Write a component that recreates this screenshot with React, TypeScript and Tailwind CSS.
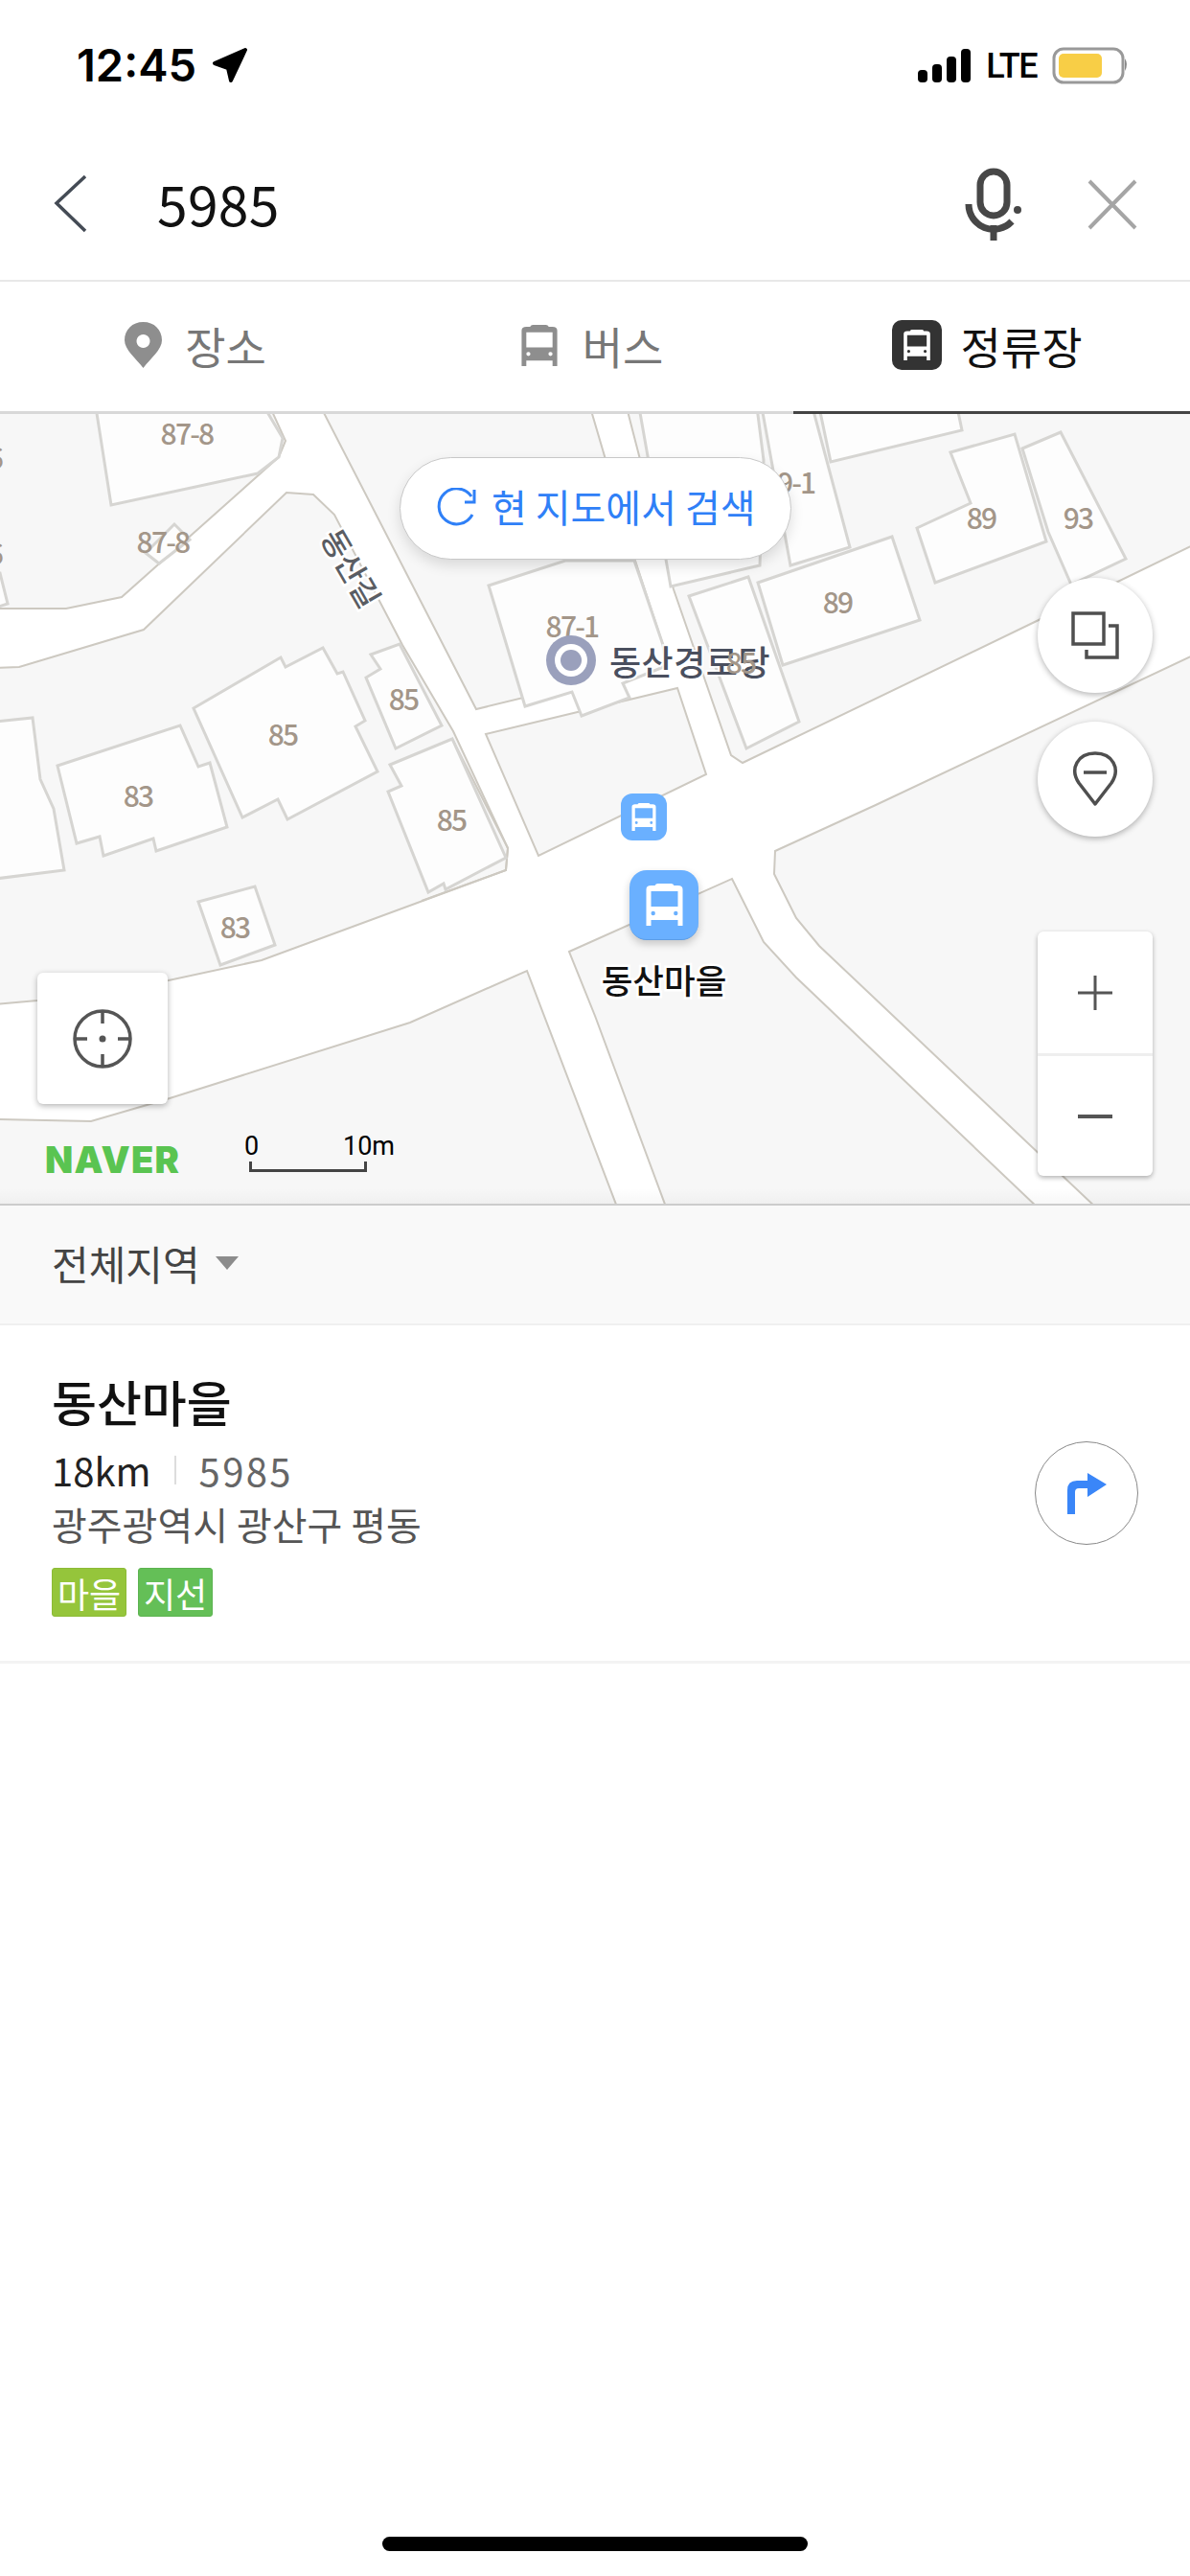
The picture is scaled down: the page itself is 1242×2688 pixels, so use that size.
import React from "react";

const Bus = ({ w, h, color }: { w: number; h: number; color: string }) => (
  <svg width={w} height={h} viewBox="0 0 38 44" className="block">
    <path
      fill={color}
      fillRule="evenodd"
      d="M0 6 Q0 2 5 2 H9 Q10 0 12 0 H26 Q28 0 29 2 H33 Q38 2 38 6 V44 H33 V38 H5 V44 H0 Z M5 8 V24 H33 V8 Z M5 31a2.2 2.2 0 1 0 4.4 0a2.2 2.2 0 1 0 -4.4 0Z M28.6 31a2.2 2.2 0 1 0 4.4 0a2.2 2.2 0 1 0 -4.4 0Z"
    />
  </svg>
);

const LAND = [
  "-5,425 282,425 298,460 291,477 127,623 69,635 -5,635",
  "-5,697 20,696 150,657 299,514 327,516 349,537 396,627 420,673 473,763 530,885 528,908 273,1002 176,1023 39,1044 -5,1048",
  "335,425 616,425 663,585 692,673 695,692 497,740",
  "507,766 707,718 737,808 562,893",
  "654,425 703,615 763,788 775,796 1084,647 1247,568 1247,425",
  "914,840 1247,683 1247,1262 1146,1262 855,987 831,958 808,912 809,888",
  "594,993 764,917 797,983 831,1020 1085,1262 696,1262 621,1060",
  "-5,1168 95,1170 174,1147 428,1067 550,1013 645,1262 -5,1262",
];

const BUILDINGS = [
  "100,425 116,527 269,494 291,477 295,457 276,425",
  "182,547 152,577 166,588 198,563",
  "-5,598 0,598 8,630 -5,634",
  "202,739 293,686 298,696 337,676 352,703 358,701 381,752 371,758 394,805 300,855 290,834 253,853",
  "60,799 188,757 207,800 219,796 237,863 163,888 160,875 108,893 104,873 80,880",
  "-5,753 34,749 42,813 56,844 67,908 -5,917",
  "207,941 266,925 287,986 230,1007",
  "387,683 417,672 461,757 413,781 382,707 397,698",
  "407,798 472,771 528,895 465,928 463,922 447,931 405,826 419,820",
  "510,611 590,585 662,585 692,673 695,695 650,713 657,728 607,747 597,722 548,737",
  "667,425 790,425 797,480 793,590 700,612",
  "795,425 825,590 887,571 848,425",
  "855,425 867,482 1004,449 999,425",
  "992,472 1059,453 1092,565 976,608 957,551 1013,525",
  "1067,468 1107,451 1175,583 1118,610 1094,555",
  "791,608 931,560 960,647 817,694",
  "719,622 781,602 834,753 779,781",
];

const NUMS: [string, number, number][] = [
  ["87-8", 195, 464],
  ["87-8", 170, 577],
  ["85", 295, 778],
  ["85", 421, 741],
  ["83", 144, 842],
  ["83", 245, 979],
  ["85", 471, 867],
  ["87-1", 597, 665],
  ["89", 1024, 552],
  ["93", 1125, 552],
  ["89", 874, 640],
  ["89-1", 823, 515],
];

const Map = () => (
  <svg
    viewBox="0 432 1242 824"
    width={1242}
    height={824}
    className="absolute inset-0 block font-['Noto_Sans_CJK_KR',sans-serif]"
  >
    <rect x={0} y={432} width={1242} height={824} fill="#ffffff" />
    {LAND.map((p) => (
      <polygon key={p} points={p} fill="#f7f7f7" stroke="#cdc9c1" strokeWidth={2} />
    ))}
    <polyline points="472,771 530,885 528,908 440,940" fill="none" stroke="#cdc9c1" strokeWidth={2} />
    {BUILDINGS.map((p) => (
      <polygon key={p} points={p} fill="#fdfdfd" stroke="#d6d5d2" strokeWidth={3} />
    ))}
    {NUMS.map(([t, x, y], i) => (
      <text key={i} x={x} y={y} textAnchor="middle" fontSize={30} fontWeight={500} letterSpacing={-1.8} fill="#a39689">
        {t}
      </text>
    ))}
    <text x={4} y={489} textAnchor="end" fontSize={30} fill="#a39689">6</text>
    <text x={4} y={589} textAnchor="end" fontSize={30} fill="#a39689">6</text>
    <text
      transform="translate(368 592) rotate(60)"
      textAnchor="middle"
      dominantBaseline="central"
      fontSize={32}
      fontWeight={500}
      fill="#5a5d63"
      stroke="#ffffff"
      strokeWidth={5}
      paintOrder="stroke"
    >
      동산길
    </text>
    <circle cx={596} cy={689} r={26} fill="#9aa0bc" />
    <circle cx={596} cy={689} r={17} fill="#ffffff" />
    <circle cx={596} cy={689} r={11} fill="#9aa0bc" />
    <text
      x={636}
      y={705}
      fontSize={36}
      fontWeight={500}
      letterSpacing={0.5}
      fill="#4a4f5e"
      stroke="#ffffff"
      strokeOpacity={0.85}
      strokeWidth={4}
      paintOrder="stroke"
    >
      동산경로당
    </text>
    <text x={773} y={703} textAnchor="middle" fontSize={30} fontWeight={500} letterSpacing={-1.8} fill="#a39689">
      85
    </text>
    <text
      x={693}
      y={1037}
      textAnchor="middle"
      fontSize={35.5}
      fontWeight={500}
      fill="#111111"
      stroke="#ffffff"
      strokeWidth={5}
      paintOrder="stroke"
    >
      동산마을
    </text>
  </svg>
);

export default function App() {
  return (
    <div className="flex h-[2688px] w-[1242px] flex-col bg-white font-['Noto_Sans_CJK_KR',sans-serif]">
      {/* status bar */}
      <div className="flex h-[110px] shrink-0 items-start justify-between pl-[80px] pr-[63px] pt-[35px]">
        <div className="flex items-center gap-[15px]">
          <span className="font-['Inter',sans-serif] text-[47px] font-semibold leading-[66px] text-black">12:45</span>
          <svg viewBox="220 50 40 38" width={40} height={38} className="block">
            <polygon
              points="256,53 224,67 238,72 241,85"
              fill="#000"
              stroke="#000"
              strokeWidth={4}
              strokeLinejoin="round"
            />
          </svg>
        </div>
        <div className="flex items-center pt-[14px]">
          <svg viewBox="957 50 55 35" width={55} height={35} className="block">
            <rect x={957} y={72} width={10} height={13} rx={4} />
            <rect x={972} y={66} width={10} height={19} rx={4} />
            <rect x={987} y={58} width={10} height={27} rx={4} />
            <rect x={1002} y={50} width={10} height={35} rx={4} />
          </svg>
          <span className="ml-[16px] font-['Roboto',sans-serif] text-[36px] font-medium leading-[36px] tracking-[-1.5px] text-black">
            LTE
          </span>
          <svg viewBox="1098 48 81 39" width={81} height={39} className="ml-[16px] block">
            <rect x={1100} y={50} width={72} height={35} rx={10} fill="none" stroke="#999" strokeWidth={3} />
            <rect x={1105} y={55} width={45} height={25} rx={5} fill="#f8ce46" />
            <path d="M1174 60 Q1178 66 1174 73 Z" fill="#888" />
          </svg>
        </div>
      </div>

      {/* search row */}
      <div className="flex h-[184px] shrink-0 items-center border-b-2 border-[#e8e8e8] pt-[24px]">
        <svg viewBox="56 184 36 62" width={36} height={62} className="ml-[56px] block">
          <polyline points="89,186 59,214 89,243" fill="none" stroke="#444b55" strokeWidth={3.5} />
        </svg>
        <span className="ml-[72px] pb-[5px] text-[57px] leading-[70px] tracking-[0.3px] text-[#111]">5985</span>
        <svg viewBox="1004 174 64 78" width={64} height={78} className="ml-auto block">
          <g fill="none" stroke="#474747" strokeWidth={7}>
            <rect x={1023} y={179} width={28} height={46} rx={14} />
            <path d="M1011 213 A26 26 0 0 0 1056 231" />
            <path d="M1037 235 V251" />
          </g>
          <circle cx={1062} cy={219} r={4} fill="#474747" />
        </svg>
        <svg viewBox="1135 186 52 53" width={52} height={53} className="ml-[67px] mr-[55px] block">
          <path d="M1137 188 L1185 237 M1185 188 L1137 237" stroke="#a5a5a5" strokeWidth={4} fill="none" />
        </svg>
      </div>

      {/* tabs */}
      <div className="grid h-[138px] shrink-0 grid-cols-3">
        <div className="flex items-center justify-center gap-[24px] border-b-[3px] border-[#d8d8d8] pb-[3px] pr-[6px]">
          <svg viewBox="0 0 39 48" width={39} height={48} className="block">
            <path
              fill="#8e8e8e"
              fillRule="evenodd"
              d="M19.5 0 C31 0 39 8 39 19 C39 29 27 38 19.5 48 C12 38 0 29 0 19 C0 8 8 0 19.5 0 Z M19.5 13 a7 7 0 1 0 0.01 0 Z"
            />
          </svg>
          <span className="text-[46px] leading-[56px] text-[#777]">장소</span>
        </div>
        <div className="flex items-center justify-center gap-[26px] border-b-[3px] border-[#d8d8d8] pb-[3px] pr-[6px]">
          <Bus w={38} h={43} color="#8e8e8e" />
          <span className="text-[46px] leading-[56px] text-[#777]">버스</span>
        </div>
        <div className="flex items-center justify-center gap-[20px] border-b-[3px] border-[#444] pb-[3px] pr-[10px]">
          <div className="flex h-[52px] w-[52px] items-center justify-center rounded-[10px] bg-[#333]">
            <Bus w={28} h={32} color="#ffffff" />
          </div>
          <span className="text-[46px] leading-[56px] text-[#111]">정류장</span>
        </div>
      </div>

      {/* map */}
      <div className="relative h-[824px] w-[1242px] shrink-0 overflow-hidden">
        <Map />
        <div className="absolute bottom-0 left-0 h-[16px] w-full bg-gradient-to-t from-black/[0.03] to-transparent" />

        {/* search here */}
        <div className="absolute left-[417px] top-[45px] flex h-[107px] w-[409px] items-center rounded-full border border-[#c8c8c8] bg-white pl-[37px] shadow-[0_6px_14px_rgba(0,0,0,0.12)]">
          <svg viewBox="455 508 42 43" width={42} height={43} className="block">
            <g fill="none" stroke="#2f80f7" strokeWidth={3}>
              <path d="M492 517 A18.5 18.5 0 1 0 493 536" />
              <path d="M495 510 V523 H485" />
            </g>
          </svg>
          <span className="ml-[16px] pb-[5px] text-[40px] leading-[50px] text-[#2f80f7]">현 지도에서 검색</span>
        </div>

        {/* right buttons */}
        <div className="absolute left-[1083px] top-[171px] flex h-[120px] w-[120px] items-center justify-center rounded-full bg-white shadow-[0_2px_6px_rgba(0,0,0,0.3)]">
          <svg viewBox="1117 637 50 50" width={50} height={50} className="block">
            <g fill="none" stroke="#4f4f4f" strokeWidth={3.5}>
              <rect x={1119} y={639} width={32} height={32} />
              <path d="M1156 652 H1165 V685 H1133 V677" />
            </g>
          </svg>
        </div>
        <div className="absolute left-[1083px] top-[321px] flex h-[120px] w-[120px] items-center justify-center rounded-full bg-white shadow-[0_2px_6px_rgba(0,0,0,0.3)]">
          <svg viewBox="1119 784 48 58" width={48} height={58} className="block">
            <path
              d="M1143 839 L1126 817 C1116 802 1125 786 1143 786 C1161 786 1170 802 1160 817 Z"
              fill="none"
              stroke="#4f4f4f"
              strokeWidth={3.5}
              strokeLinejoin="round"
            />
            <path d="M1131 806 H1155" stroke="#4f4f4f" strokeWidth={3.5} />
          </svg>
        </div>
        <div className="absolute left-[1083px] top-[540px] flex h-[255px] w-[120px] flex-col rounded-[6px] bg-white shadow-[0_2px_5px_rgba(0,0,0,0.3)]">
          <div className="flex h-[127px] items-center justify-center">
            <svg viewBox="0 0 36 36" width={36} height={36} className="block">
              <path d="M18 0 V36 M0 18 H36" stroke="#555" strokeWidth={3} fill="none" />
            </svg>
          </div>
          <div className="h-[3px] bg-[#eeeeee]" />
          <div className="flex flex-1 items-center justify-center">
            <div className="h-[4px] w-[36px] bg-[#555]" />
          </div>
        </div>

        {/* locate */}
        <div className="absolute left-[39px] top-[583px] flex h-[137px] w-[136px] items-center justify-center rounded-[6px] bg-white shadow-[0_2px_6px_rgba(0,0,0,0.3)]">
          <svg viewBox="75 1051 64 64" width={64} height={64} className="block">
            <g fill="none" stroke="#555" strokeWidth={3.5}>
              <circle cx={107} cy={1083} r={29} />
              <path d="M107 1054 V1067 M107 1099 V1112 M78 1083 H91 M123 1083 H136" />
            </g>
            <circle cx={107} cy={1083} r={3.5} fill="#555" />
          </svg>
        </div>

        {/* markers */}
        <div className="absolute left-[648px] top-[396px] flex h-[49px] w-[48px] items-center justify-center rounded-[12px] bg-[#6ab0ff]">
          <Bus w={26} h={29} color="#ffffff" />
        </div>
        <div className="absolute left-[657px] top-[476px] flex h-[73px] w-[72px] items-center justify-center rounded-[18px] border-b border-[#5c9de6] bg-[#6ab0ff] shadow-[0_4px_8px_rgba(0,0,0,0.2)]">
          <Bus w={39} h={44} color="#ffffff" />
        </div>

        {/* logo and scale */}
        <span className="absolute left-[47px] top-[758px] font-['Inter',sans-serif] text-[38px] font-black leading-[40px] tracking-[1.2px] text-[#5ac451]">
          NAVER
        </span>
        <span className="absolute left-[255px] top-[748px] font-['Roboto',sans-serif] text-[27px] leading-[32px] text-black">0</span>
        <span className="absolute left-[358px] top-[748px] font-['Roboto',sans-serif] text-[27px] leading-[32px] text-black">10m</span>
        <div className="absolute left-[260px] top-[780px] h-[11px] w-[123px] border-x-[3px] border-b-[3px] border-[#444]" />
      </div>

      {/* filter */}
      <div className="flex h-[127px] shrink-0 items-center border-y-[2px] border-t-[#cccccc] border-b-[#f0f0f0] bg-[#f9f9f9] pb-[4px] pl-[54px]">
        <span className="text-[42px] leading-[52px] text-[#444]">전체지역</span>
        <svg viewBox="0 0 24 14" width={24} height={14} className="ml-[16px] block">
          <polygon points="0,0 24,0 12,14" fill="#8c8c8c" />
        </svg>
      </div>

      {/* result */}
      <div className="flex h-[353px] shrink-0 items-center justify-between border-b-[3px] border-[#f3f3f3] pl-[54px] pr-[54px]">
        <div className="flex flex-col self-start pt-[47px]">
          <span className="text-[51px] font-medium leading-[64px] text-[#111]">동산마을</span>
          <div className="mt-[16px] flex items-center text-[40px] leading-[48px]">
            <span className="text-[#222]">18km</span>
            <span className="mx-[24px] h-[30px] w-[2px] bg-[#ddd]" />
            <span className="tracking-[2.4px] text-[#666]">5985</span>
          </div>
          <span className="mt-[6px] text-[40px] leading-[52px] text-[#555]">광주광역시 광산구 평동</span>
          <div className="mt-[20px] flex gap-[12px]">
            <span className="flex h-[51px] w-[78px] items-center justify-center rounded-[3px] border border-[#8cbb36] bg-[#95c53b] text-[36px] leading-[40px] text-white">
              마을
            </span>
            <span className="flex h-[51px] w-[78px] items-center justify-center rounded-[3px] border border-[#5cb350] bg-[#64bf57] text-[36px] leading-[40px] text-white">
              지선
            </span>
          </div>
        </div>
        <div className="flex h-[108px] w-[108px] items-center justify-center rounded-full border border-[#888]">
          <svg viewBox="1120 1537 41 43" width={41} height={43} className="block">
            <path
              fill="#3a86f8"
              d="M1120 1580 V1555 Q1120 1545 1130 1545 H1141 V1537 L1161 1549 L1141 1562 V1553 H1132 Q1128 1553 1128 1557 V1580 Z"
            />
          </svg>
        </div>
      </div>

      {/* home indicator */}
      <div className="mb-[26px] mt-auto h-[15px] w-[444px] self-center rounded-full bg-black" />
    </div>
  );
}
